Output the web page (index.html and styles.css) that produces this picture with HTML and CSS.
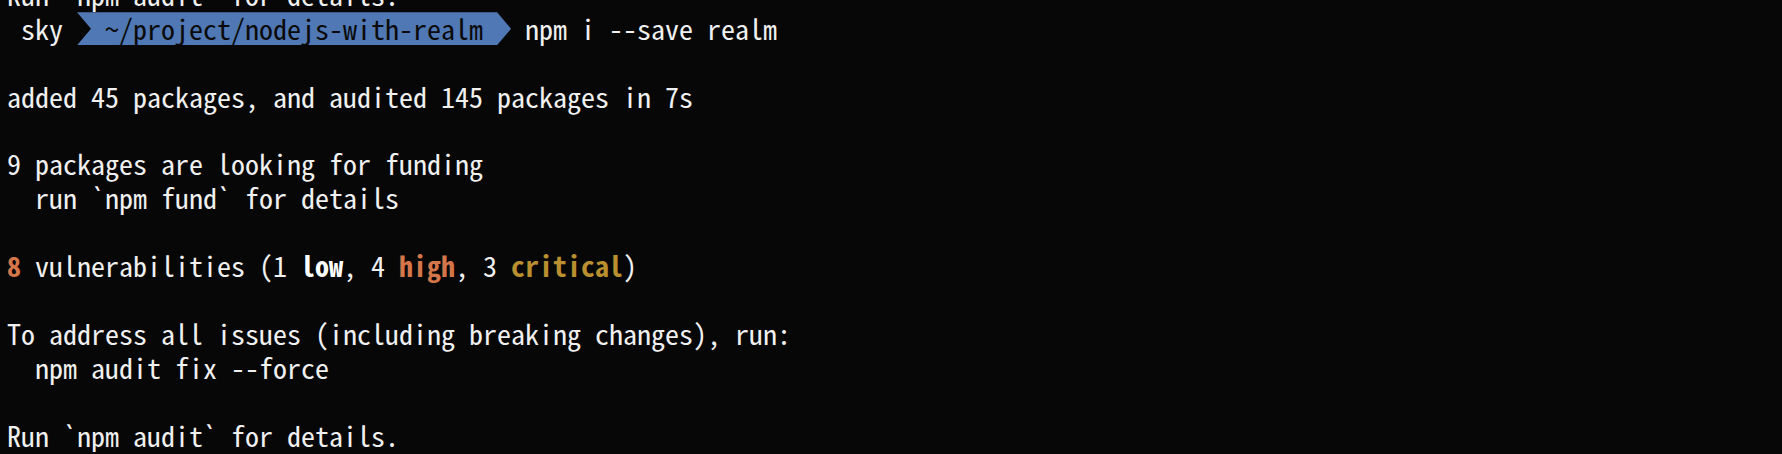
FILE: index.html
```html
<!DOCTYPE html>
<html lang="en">
<head>
<meta charset="utf-8">
<title>Terminal</title>
<link rel="stylesheet" href="styles.css">
</head>
<body>
<div class="term">
  <div class="line">Run `npm audit` for details.</div>
  <div class="line prompt">
    <span class="seg-user"> sky </span><span class="seg-path">~/project/nodejs-with-realm</span><span class="cmd"> npm i --save realm</span>
  </div>
  <div class="line"> </div>
  <div class="line">added 45 packages, and audited 145 packages in 7s</div>
  <div class="line"> </div>
  <div class="line">9 packages are looking for funding</div>
  <div class="line">  run `npm fund` for details</div>
  <div class="line"> </div>
  <div class="line"><span class="sev-high">8</span> vulnerabilities (1 <b class="bold">low</b>, 4 <span class="sev-high">high</span>, 3 <span class="sev-crit">critical</span>)</div>
  <div class="line"> </div>
  <div class="line">To address all issues (including breaking changes), run:</div>
  <div class="line">  npm audit fix --force</div>
  <div class="line"> </div>
  <div class="line">Run `npm audit` for details.</div>
</div>
</body>
</html>
```
FILE: styles.css
```css
html, body {
  margin: 0;
  padding: 0;
  background: #070707;
  overflow: hidden;
}
.term {
  margin-top: -22px;
  padding-left: 7px;
  color: #f0f0f0;
  font-family: "Noto Sans Mono CJK KR", "Noto Sans Mono CJK SC", "DejaVu Sans Mono", monospace;
  font-size: 28px;
}
.line {
  height: 33.9px;
  line-height: 33.9px;
  white-space: pre;
}
.prompt {
  display: flex;
  align-items: center;
}
.seg-user {
  white-space: pre;
}
.seg-path {
  height: 33px;
  line-height: 33px;
  padding: 0 28px;
  background: #5078b4;
  color: #0a0a0a;
  white-space: pre;
  clip-path: polygon(0 0, calc(100% - 14px) 0, 100% 50%, calc(100% - 14px) 100%, 0 100%, 14px 50%);
}
.cmd {
  white-space: pre;
}
.bold {
  font-weight: bold;
  color: #ffffff;
}
.sev-high {
  color: #d4764a;
  font-weight: bold;
}
.sev-crit {
  color: #b98f30;
  font-weight: bold;
}
```
